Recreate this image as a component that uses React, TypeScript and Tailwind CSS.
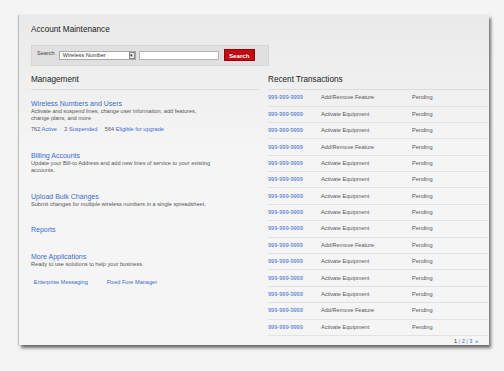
import React from "react";

const rows: [string, string][] = [
  ["999-999-9999", "Add/Remove Feature"],
  ["999-999-9999", "Activate Equipment"],
  ["999-999-9999", "Activate Equipment"],
  ["999-999-9999", "Add/Remove Feature"],
  ["999-999-9999", "Activate Equipment"],
  ["999-999-9999", "Activate Equipment"],
  ["999-999-9999", "Activate Equipment"],
  ["999-999-9999", "Activate Equipment"],
  ["999-999-9999", "Activate Equipment"],
  ["999-999-9999", "Add/Remove Feature"],
  ["999-999-9999", "Activate Equipment"],
  ["999-999-9999", "Activate Equipment"],
  ["999-999-9999", "Activate Equipment"],
  ["999-999-9999", "Add/Remove Feature"],
  ["999-999-9999", "Activate Equipment"],
];

export default function App() {
  return (
    <div className="w-[504px] h-[371px] bg-[#f4f4f4] pt-[15px] pl-[19px] font-['Liberation_Sans',Arial,sans-serif] overflow-hidden">
      <div className="w-[470px] h-[330px] bg-[linear-gradient(to_bottom,#eaeaea,#f5f5f5_140px)] shadow-[2px_3px_3px_rgba(0,0,0,0.55),-1px_0_1px_rgba(0,0,0,0.2)] pl-[12px] pt-[9.5px] flex flex-col">
        <div className="text-[8.2px] leading-[10px] text-[#222]">Account Maintenance</div>
        <div className="mt-[10px] w-[238px] h-[23px] bg-[#e0e0e0] border border-[#d6d6d6] flex items-center pl-[5px]">
          <span className="text-[5.6px] leading-[7px] text-[#444] -mt-[3px]">Search</span>
          <div className="ml-[4px] w-[77px] h-[9px] bg-white border border-[#a9a9a9] flex items-center justify-between">
            <span className="pl-[3px] text-[5.6px] leading-[7px] text-[#333]">Wireless Number</span>
            <span className="w-[6px] h-[7px] border border-[#888] bg-[#eee] flex items-center justify-center text-[5px] leading-[5px] text-[#222]">▾</span>
          </div>
          <div className="ml-[3px] w-[80px] h-[9px] bg-white border border-[#b5b5b5]" />
          <div className="ml-[5px] w-[31px] h-[12px] bg-[#c20a10] border border-[#9a0008] flex items-center justify-center text-white font-bold text-[6.2px] leading-[7px]">
            Search
          </div>
        </div>
        <div className="mt-[9.5px] flex">
          {/* Left column */}
          <div className="w-[228px]">
            <div className="text-[8.2px] leading-[10px] text-[#222] pb-[4px] border-b border-[#dcdcdc]">Management</div>
            <div className="mt-[9px] text-[7px] leading-[9px] text-[#3b6bd0]">Wireless Numbers and Users</div>
            <div className="text-[5.6px] leading-[7.3px] text-[#555]">
              Activate and suspend lines, change user information, add features,
              <br />
              change plans, and more
            </div>
            <div className="mt-[3.6px] text-[5.6px] leading-[7.3px] text-[#555] flex gap-[7.5px]">
              <span>
                762 <span className="text-[#3b6bd0]">Active</span>
              </span>
              <span>
                2 <span className="text-[#3b6bd0]">Suspended</span>
              </span>
              <span>
                564 <span className="text-[#3b6bd0]">Eligible for upgrade</span>
              </span>
            </div>
            <div className="mt-[17.5px] text-[7px] leading-[9px] text-[#3b6bd0]">Billing Accounts</div>
            <div className="text-[5.6px] leading-[7px] text-[#555]">
              Update your Bill-to Address and add new lines of service to your existing
              <br />
              accounts.
            </div>
            <div className="mt-[17.6px] text-[7px] leading-[9px] text-[#3b6bd0]">Upload Bulk Changes</div>
            <div className="text-[5.6px] leading-[7.3px] text-[#555]">
              Submit changes for multiple wireless numbers in a single spreadsheet.
            </div>
            <div className="mt-[16.8px] text-[7px] leading-[9px] text-[#3b6bd0]">Reports</div>
            <div className="mt-[17.7px] text-[7px] leading-[9px] text-[#3b6bd0]">More Applications</div>
            <div className="text-[5.6px] leading-[7.3px] text-[#555]">Ready to use solutions to help your business.</div>
            <div className="mt-[11px] pl-[2.7px] flex text-[5.6px] leading-[7.3px] text-[#3b6bd0]">
              <span className="w-[73px]">Enterprise Messaging</span>
              <span>Fixed Fore Manager</span>
            </div>
          </div>
          {/* Right column */}
          <div className="ml-[9px] w-[220px] flex flex-col">
            <div className="text-[8.2px] leading-[10px] text-[#222] pb-[4px] border-b border-[#dcdcdc]">Recent Transactions</div>
            {rows.map(([num, act], i) => (
              <div key={i} className="h-[16.4px] border-b border-[#e2e2e2] flex items-center text-[5.6px] leading-[7px] text-[#555]">
                <span className="w-[53px] text-[#3b6bd0]">{num}</span>
                <span className="w-[91px]">{act}</span>
                <span>Pending</span>
              </div>
            ))}
            <div className="mt-[2px] pr-[10px] flex justify-end text-[5.6px] leading-[7px] text-[#999] gap-[1.5px]">
              <span className="text-[#333]">1</span>
              <span>|</span>
              <span className="text-[#3b6bd0]">2</span>
              <span>|</span>
              <span className="text-[#3b6bd0]">3</span>
              <span className="text-[#3b6bd0] ml-[1px]">»</span>
            </div>
          </div>
        </div>
      </div>
    </div>
  );
}
